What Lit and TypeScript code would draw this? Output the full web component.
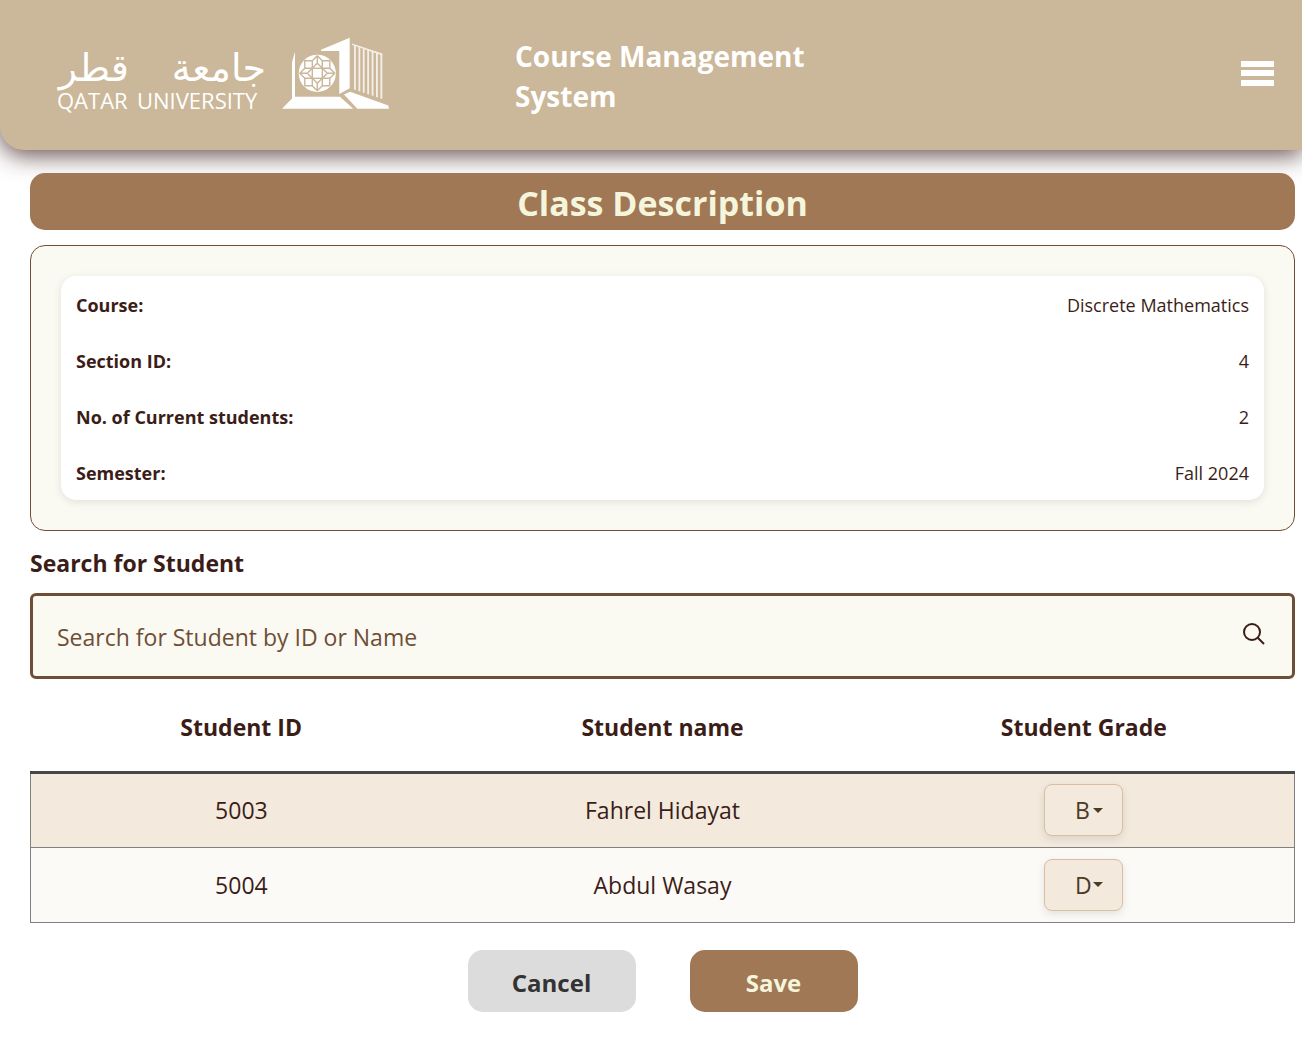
import { LitElement, html, css, svg } from "lit";
import { customElement, state } from "lit/decorators.js";

interface Student {
  id: number;
  name: string;
  grade: string;
}

const GRADES = ["A", "B", "C", "D", "F"];

@customElement("university-logo")
export class UniversityLogo extends LitElement {
  static styles = css`
    :host {
      display: block;
      width: 332px;
      flex: none;
    }
    .logo {
      display: block;
      width: 100%;
      height: auto;
      fill: #fff;
    }
    .arabic {
      font: 38px "DejaVu Sans", sans-serif;
    }
    .latin {
      font: 22px "Open Sans", sans-serif;
    }
    .cut {
      stroke: #cbb799;
      stroke-width: 1.4px;
      fill: none;
    }
    .slat {
      fill: #f3eee6;
    }
  `;

  render() {
    const slats = [0, 1, 2, 3, 4, 5, 6];
    const turns = [0, 90, 180, 270];
    return html`
      <svg class="logo" viewBox="0 0 332 76" role="img" aria-label="Qatar University">
        <text class="arabic" x="209" y="44" direction="rtl">جامعة</text>
        <text class="arabic" x="72" y="44" direction="rtl">قطر</text>
        <text class="latin" x="0" y="72">QATAR</text>
        <text class="latin" x="80" y="72">UNIVERSITY</text>
        <path d="M238 14.7V59.7H283L296.3 71.7H225L235 61.5V25Z" />
        <path d="M264 12.7L292.7 .7V51.3L282.3 57V14H264Z" />
        <path d="M287 57.5L293 54.7L331.3 68.5L332 71.7H300.3Z" />
        ${slats.map((i) => {
          const x = 297 + i * 4.4;
          const top = 8 + i * 1.5;
          const bottom = 52.5 + i * 1.5;
          return svg`<path class="slat" d="M${x} ${top}h1.9V${bottom + 0.6}L${x} ${bottom}Z" />`;
        })}
        <path class="slat" d="M295 6.5L325.3 16.5V18.5L295 8Z" />
        <circle cx="260.3" cy="36.3" r="18.6" />
        <g transform="translate(260.3 36.3)">
          <rect class="cut" x="-5" y="-5" width="10" height="10" />
          ${turns.map(
            (a) => svg`<g class="cut" transform="rotate(${a})">
              <path d="M5 -5V-12.5H12.5V-5Z" />
              <path d="M0 -10L5 -5M0 -10L-5 -5M0 -10V-18M0 -17.5L5 -12.5M0 -17.5L-5 -12.5" />
            </g>`
          )}
        </g>
      </svg>
    `;
  }
}

@customElement("app-root")
export class AppRoot extends LitElement {
  static styles = css`
    :host {
      display: block;
      font-family: "Open Sans", "Noto Sans", sans-serif;
      color: #3b1d18;
      background: #fff;
    }
    * {
      box-sizing: border-box;
    }
    .header {
      display: flex;
      align-items: center;
      height: 150px;
      padding: 0 28px 0 57px;
      background: #cbb799;
      border-bottom-left-radius: 24px;
      box-shadow: 0 5px 25px #3b1d1dcc;
    }
    .brand {
      flex: none;
      width: 300px;
      margin: 0 auto 0 126px;
      padding-top: 2px;
      font-size: 28px;
      line-height: 40px;
      font-weight: 700;
      color: #fff;
    }
    .menu {
      width: 33px;
      padding: 0;
      border: 0;
      background: none;
    }
    .menu-icon {
      display: block;
      fill: #fff;
    }
    .page {
      padding: 23px 7px 26px 30px;
    }
    .title {
      margin: 0 0 15px;
      padding-top: 3px;
      font-size: 34px;
      line-height: 54px;
      font-weight: 700;
      text-align: center;
      color: #f5f5dc;
      background: #a07855;
      border-radius: 15px;
    }
    .panel {
      padding: 30px;
      border: 1px solid #6f4e37;
      border-radius: 15px;
      background: #fafaf2;
    }
    .facts {
      margin: 0;
      border-radius: 15px;
      background: #fff;
      box-shadow: 0 2px 8px #0000001a;
    }
    .fact {
      display: flex;
      justify-content: space-between;
      padding: 2px 15px 0;
      font-size: 18px;
      line-height: 54px;
    }
    .fact-name {
      font-weight: 700;
    }
    .fact-value {
      margin: 0;
    }
    .search-label {
      display: block;
      padding: 16px 0 14px;
      font-size: 23px;
      line-height: 32px;
      font-weight: 700;
    }
    .search {
      display: flex;
      align-items: center;
      height: 86px;
      border: 3px solid #6f4e37;
      border-radius: 6px;
      background: #fafaf2;
    }
    .search-input {
      flex: 1;
      min-width: 0;
      padding: 2px 24px 0;
      border: 0;
      outline: 0;
      background: none;
      font: inherit;
      font-size: 23px;
      line-height: 32px;
      color: inherit;
    }
    .search-input::placeholder {
      color: #6f4e37;
      opacity: 1;
    }
    .search-button {
      padding: 0 27px 4px;
      border: 0;
      background: none;
      color: inherit;
    }
    .search-icon {
      display: block;
      fill: none;
      stroke: currentColor;
      stroke-width: 2;
    }
    .students {
      width: 100%;
      table-layout: fixed;
      border-collapse: collapse;
      text-align: center;
    }
    .column {
      height: 93px;
      padding: 4px 0 0;
      font-size: 23px;
      font-weight: 700;
    }
    .body {
      border: 1px solid #808080;
    }
    .head {
      border-bottom: 3px solid #474747;
    }
    .row {
      background: #fbfaf6;
      border-bottom: 1px solid #808080;
    }
    .row:nth-child(odd) {
      background: #f3eadd;
    }
    .cell {
      height: 75px;
      padding: 0;
      font-size: 23px;
    }
    .grade {
      display: inline-grid;
      align-items: center;
      vertical-align: middle;
    }
    .grade-select,
    .grade-arrow {
      grid-area: 1 / 1;
    }
    .grade-select {
      appearance: none;
      width: 79px;
      height: 52px;
      padding: 0 16px 0 30px;
      border: 1px solid #d8bf9f;
      border-radius: 8px;
      background: #f3eadd;
      box-shadow: 0 3px 8px #0000001a;
      font: inherit;
      color: #4b3a26;
    }
    .grade-arrow {
      justify-self: end;
      margin-right: 20px;
      fill: #4b3a26;
      pointer-events: none;
    }
    .actions {
      display: flex;
      justify-content: center;
      gap: 54px;
      padding-top: 27px;
    }
    .button {
      width: 168px;
      height: 62px;
      padding: 4px 0 0;
      border: 0;
      border-radius: 15px;
      font: inherit;
      font-size: 24px;
      font-weight: 700;
    }
    .cancel {
      background: #dcdcdc;
      color: #333;
    }
    .save {
      background: #a07855;
      color: #f5f5dc;
    }
  `;

  @state() private students: Student[] = [
    { id: 5003, name: "Fahrel Hidayat", grade: "B" },
    { id: 5004, name: "Abdul Wasay", grade: "D" },
  ];

  private facts = [
    ["Course:", "Discrete Mathematics"],
    ["Section ID:", "4"],
    ["No. of Current students:", "2"],
    ["Semester:", "Fall 2024"],
  ];

  render() {
    return html`
      <header class="header">
        <university-logo></university-logo>
        <div class="brand">Course Management System</div>
        <button class="menu" type="button" aria-label="Menu">
          <svg class="menu-icon" width="33" height="29" viewBox="0 0 33 29">
            <path d="M0 0H33V6H0ZM0 9H33V15H0ZM0 19H33V25H0Z" />
          </svg>
        </button>
      </header>
      <main class="page">
        <h1 class="title">Class Description</h1>
        <section class="panel">
          <dl class="facts">
            ${this.facts.map(
              ([name, value]) => html`
                <div class="fact">
                  <dt class="fact-name">${name}</dt>
                  <dd class="fact-value">${value}</dd>
                </div>
              `
            )}
          </dl>
        </section>
        <label class="search-label" for="search">Search for Student</label>
        <div class="search">
          <input
            class="search-input"
            id="search"
            type="text"
            placeholder="Search for Student by ID or Name"
          />
          <button class="search-button" type="button" aria-label="Search">
            <svg class="search-icon" width="22" height="22" viewBox="0 0 22 22">
              <circle cx="9" cy="9" r="8" />
              <path d="M14.5 14.5L21 21" />
            </svg>
          </button>
        </div>
        <table class="students">
          <thead class="head">
            <tr>
              <th class="column" scope="col">Student ID</th>
              <th class="column" scope="col">Student name</th>
              <th class="column" scope="col">Student Grade</th>
            </tr>
          </thead>
          <tbody class="body">
            ${this.students.map(
              (s) => html`
                <tr class="row">
                  <td class="cell">${s.id}</td>
                  <td class="cell">${s.name}</td>
                  <td class="cell">
                    <span class="grade">
                      <select class="grade-select" aria-label="Grade of ${s.name}">
                        ${GRADES.map(
                          (g) => html`<option ?selected=${g === s.grade}>${g}</option>`
                        )}
                      </select>
                      <svg class="grade-arrow" width="10" height="5" viewBox="0 0 10 5">
                        <path d="M0 0H10L5 5Z" />
                      </svg>
                    </span>
                  </td>
                </tr>
              `
            )}
          </tbody>
        </table>
        <div class="actions">
          <button class="button cancel" type="button">Cancel</button>
          <button class="button save" type="button">Save</button>
        </div>
      </main>
    `;
  }
}
